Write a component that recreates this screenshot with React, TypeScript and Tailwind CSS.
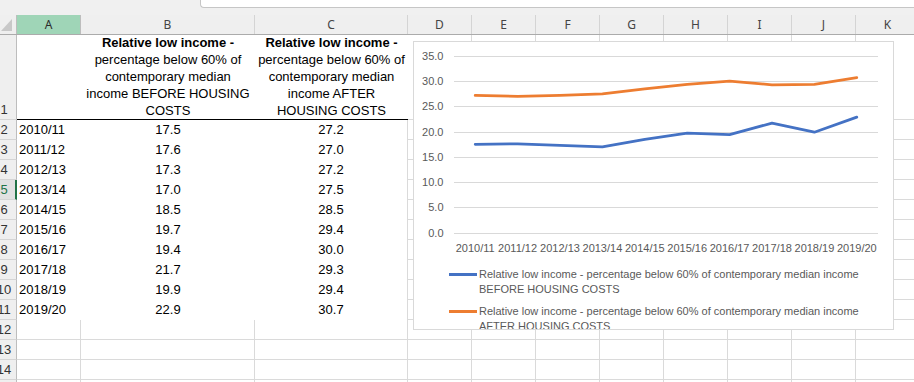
import React from "react";

const colLetters = ["A", "B", "C", "D", "E", "F", "G", "H", "I", "J", "K"];
const widthCls = [
  "w-[64px]",
  "w-[174px]",
  "w-[153px]",
  "w-[64px]",
  "w-[64px]",
  "w-[64px]",
  "w-[64px]",
  "w-[64px]",
  "w-[64px]",
  "w-[64px]",
  "w-[64px]",
];

const years = ["2010/11", "2011/12", "2012/13", "2013/14", "2014/15", "2015/16", "2016/17", "2017/18", "2018/19", "2019/20"];
const before = [17.5, 17.6, 17.3, 17.0, 18.5, 19.7, 19.4, 21.7, 19.9, 22.9];
const after = [27.2, 27.0, 27.2, 27.5, 28.5, 29.4, 30.0, 29.3, 29.4, 30.7];

function cellBorder(r: number, c: number): string {
  if (r === 1 && c <= 2) return "border-b border-b-black";
  if (r >= 2 && r <= 11 && c <= 1) return "";
  if (r >= 2 && r <= 11 && c === 2) return "border-r border-r-[#dadada]";
  return "border-r border-b border-[#dadada]";
}

function RowHeader({ n, tall }: { n: number; tall?: boolean }) {
  const active = n === 5;
  return (
    <div
      className={
        active
          ? "relative w-[17px] shrink-0 overflow-hidden bg-[#e1e1e1] border-b border-b-[#d5d5d5] border-r-2 border-r-[#217346]"
          : "relative w-[17px] shrink-0 overflow-hidden bg-[#efefef] border-b border-b-[#d5d5d5] border-r border-r-[#bdbdbd]"
      }
    >
      <div
        className={
          (active ? "text-[#217346] " : "text-[#333333] ") +
          (tall ? "absolute bottom-0 " : "absolute top-0 ") +
          "left-[-8px] w-[24px] text-center text-[13px] leading-[19px] font-['Liberation_Sans']"
        }
      >
        {n}
      </div>
    </div>
  );
}

function HeaderText({ rest }: { rest: string }) {
  return (
    <div className="flex h-full flex-col justify-end px-[2px] text-center text-[13px] leading-[17px] text-black">
      <div>
        <span className="font-bold">Relative low income -</span> {rest}
      </div>
    </div>
  );
}

function DataRow({ r }: { r: number }) {
  const i = r - 2;
  const has = i >= 0 && i < 10;
  return (
    <div className="flex h-[20px] shrink-0">
      <RowHeader n={r} />
      {colLetters.map((_, c) => (
        <div key={c} className={widthCls[c] + " shrink-0 " + cellBorder(r, c)}>
          {has && c === 0 && <div className="pl-[2px] text-[13px] leading-[20px] text-black">{years[i]}</div>}
          {has && c === 1 && <div className="text-center text-[13px] leading-[20px] text-black">{before[i].toFixed(1)}</div>}
          {has && c === 2 && <div className="text-center text-[13px] leading-[20px] text-black">{after[i].toFixed(1)}</div>}
        </div>
      ))}
    </div>
  );
}

function Chart() {
  const x = (i: number) => 61.2 + 42.4 * i;
  const y = (v: number) => 190.7 - 5.049 * v;
  const ticks = [35, 30, 25, 20, 15, 10, 5, 0];
  const pts = (arr: number[]) => arr.map((v, i) => `${x(i).toFixed(1)},${y(v).toFixed(1)}`).join(" ");
  const legendText = "Relative low income - percentage below 60% of contemporary median income";
  return (
    <div className="absolute left-[413px] top-[41px] flex h-[289px] w-[481px] flex-col overflow-hidden border border-[#d9d9d9] bg-white">
      <svg width="479" height="218" className="shrink-0 font-['Liberation_Sans']">
        {ticks.map((t) => (
          <g key={t}>
            <line x1="40" x2="464" y1={Math.round(y(t)) + 0.5} y2={Math.round(y(t)) + 0.5} stroke="#d9d9d9" strokeWidth="1" />
            <text x="29.5" y={y(t) + 4} textAnchor="end" fontSize="11" fill="#595959">
              {t.toFixed(1)}
            </text>
          </g>
        ))}
        {years.map((yr, i) => (
          <text key={yr} x={x(i)} y="210" textAnchor="middle" fontSize="11" fill="#595959">
            {yr}
          </text>
        ))}
        <polyline points={pts(after)} fill="none" stroke="#ed7d31" strokeWidth="2.75" strokeLinecap="round" strokeLinejoin="round" />
        <polyline points={pts(before)} fill="none" stroke="#4472c4" strokeWidth="2.75" strokeLinecap="round" strokeLinejoin="round" />
      </svg>
      <div className="flex flex-col gap-[7px] pl-[35px] pt-[7px] font-['Liberation_Sans'] text-[11px] leading-[15px] text-[#595959]">
        <div className="flex items-start gap-[2px]">
          <div className="mt-[6px] h-[3px] w-[28px] shrink-0 bg-[#4472c4]" />
          <div className="w-[400px]">{legendText} BEFORE HOUSING COSTS</div>
        </div>
        <div className="flex items-start gap-[2px]">
          <div className="mt-[6px] h-[3px] w-[28px] shrink-0 bg-[#ed7d31]" />
          <div className="w-[400px]">{legendText} AFTER HOUSING COSTS</div>
        </div>
      </div>
    </div>
  );
}

export default function App() {
  const rows = [2, 3, 4, 5, 6, 7, 8, 9, 10, 11, 12, 13, 14, 15];
  return (
    <div className="relative flex h-[382px] w-[914px] flex-col overflow-hidden bg-white font-['Liberation_Sans']">
      {/* top strip with formula box */}
      <div className="flex h-[15px] shrink-0 bg-[#f0f0f0]">
        <div className="w-[200px] shrink-0" />
        <div className="h-[8px] flex-1 rounded-bl-[4px] border-b border-l border-[#c6c6c6] bg-white" />
      </div>
      {/* column headers */}
      <div className="flex h-[20px] shrink-0 border-b border-b-[#ababab] bg-[#efefef]">
        <div className="relative w-[17px] shrink-0 border-r border-r-[#bdbdbd]">
          <svg width="16" height="19" className="absolute left-0 top-0">
            <polygon points="12,4 12,16 1,16" fill="#c8c8c8" />
          </svg>
        </div>
        {colLetters.map((l, c) => (
          <div
            key={l}
            className={
              widthCls[c] +
              (c === 0
                ? " shrink-0 border-r border-r-[#bdbdbd] bg-[#9fd5b7] text-[#2b2b2b]"
                : " shrink-0 border-r border-r-[#d4d4d4] text-[#444444]") +
              " text-center font-['Noto_Sans'] text-[12px] leading-[19px]"
            }
          >
            {l}
          </div>
        ))}
      </div>
      {/* row 1 */}
      <div className="flex h-[85px] shrink-0">
        <RowHeader n={1} tall />
        {colLetters.map((_, c) => (
          <div key={c} className={widthCls[c] + " shrink-0 " + cellBorder(1, c)}>
            {c === 1 && <HeaderText rest="percentage below 60% of contemporary median income BEFORE HOUSING COSTS" />}
            {c === 2 && <HeaderText rest="percentage below 60% of contemporary median income AFTER HOUSING COSTS" />}
          </div>
        ))}
      </div>
      {rows.map((r) => (
        <DataRow key={r} r={r} />
      ))}
      <Chart />
    </div>
  );
}
